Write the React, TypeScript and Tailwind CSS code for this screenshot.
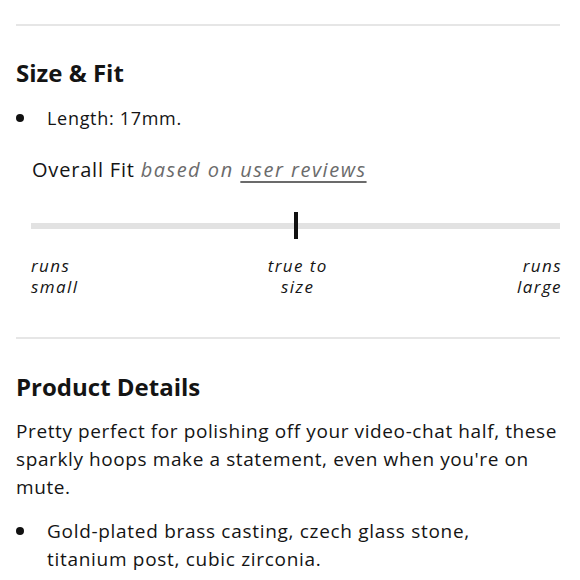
import React from "react";

function Bullet({ children }: { children: React.ReactNode }) {
  return (
    <li className="flex items-start">
      <span className="mt-[10px] h-[8px] w-[8px] shrink-0 rounded-full bg-[#111]" />
      <span className="ml-[23px]">{children}</span>
    </li>
  );
}

export default function App() {
  return (
    <div className="min-h-[580px] w-[580px] bg-white pl-4 pr-5 font-['Open_Sans',sans-serif] text-[#141414]">
      <div className="pt-6">
        <div className="h-[2px] bg-[#e6e6e6]" />
      </div>

      <h2 className="mt-[33px] text-[24px] font-bold leading-[28px]">Size &amp; Fit</h2>

      <ul className="mt-[17px] text-[18px] leading-[28px] tracking-[0.7px]">
        <Bullet>Length: 17mm.</Bullet>
      </ul>

      <div className="mt-[24px] pl-4 text-[20px] leading-[28px] tracking-[0.8px]">
        Overall Fit{" "}
        <span className="italic tracking-[1.5px] text-[#6b6b6b]">
          based on <span className="underline underline-offset-[4px]">user reviews</span>
        </span>
      </div>

      <div className="ml-[15px] mt-[28px]">
        <div className="relative flex h-[27px] items-center">
          <div className="h-[6px] w-full bg-[#e2e2e2]" />
          <div className="absolute left-1/2 top-0 h-[27px] w-[4px] -translate-x-1/2 bg-[#111]" />
        </div>
        <div className="mr-[-2px] mt-[16px] flex justify-between text-[17px] italic leading-[21px] tracking-[1.4px]">
          <div className="text-left">
            runs
            <br />
            small
          </div>
          <div className="text-center">
            true to
            <br />
            size
          </div>
          <div className="text-right">
            runs
            <br />
            large
          </div>
        </div>
      </div>

      <div className="mt-[40px] h-[2px] bg-[#e6e6e6]" />

      <h2 className="mt-[34px] text-[24px] font-bold leading-[28px]">Product Details</h2>

      <p className="mt-[16px] text-[19px] leading-[28px] tracking-[0.6px]">
        Pretty perfect for polishing off your video-chat half, these sparkly hoops make a statement,
        even when you're on mute.
      </p>

      <ul className="mt-[16px] text-[19px] leading-[28px] tracking-[0.7px]">
        <Bullet>
          Gold-plated brass casting, czech glass stone,
          <br />
          titanium post, cubic zirconia.
        </Bullet>
      </ul>
    </div>
  );
}
